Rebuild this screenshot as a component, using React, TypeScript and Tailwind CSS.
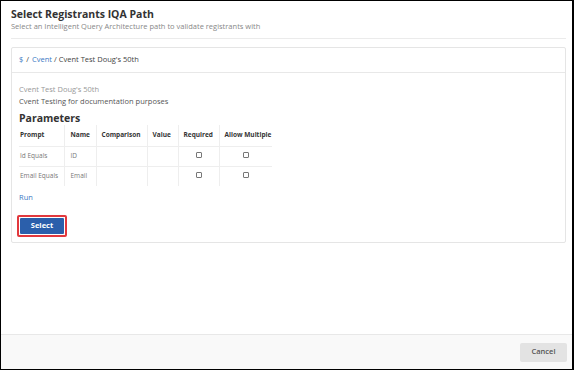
import React from "react";

const cols = [
  { label: "Prompt", w: "w-[45px]", pl: "pl-[1px]" },
  { label: "Name", w: "w-[32px]", pl: "pl-[6px]" },
  { label: "Comparison", w: "w-[51px]", pl: "pl-[5px]" },
  { label: "Value", w: "w-[31px]", pl: "pl-[5px]" },
  { label: "Required", w: "w-[41px]", pl: "pl-[5px]" },
  { label: "Allow Multiple", w: "w-[53px]", pl: "pl-[5px]" },
];

const rows = [
  ["Id Equals", "ID"],
  ["Email Equals", "Email"],
];

function Box() {
  return <span className="inline-block w-[6px] h-[6px] border border-[#777] rounded-[1px] bg-white" />;
}

export default function App() {
  return (
    <div className="w-[574px] h-[370px] border border-black border-r-2 bg-white flex flex-col font-['Open_Sans',sans-serif] text-[#333]">
      <div className="flex-1 pl-[10px] pr-[6px] pt-[7px]">
        <div className="border-b border-[#ebebeb] pb-[7px]">
          <div className="text-[10.5px] leading-[13px] font-bold text-[#333]">Select Registrants IQA Path</div>
          <div className="text-[7.5px] leading-[10px] text-[#888]">
            Select an Intelligent Query Architecture path to validate registrants with
          </div>
        </div>
        <div className="mt-[8px] border border-[#e5e5e5] rounded-[2px]">
          <div className="h-[25px] border-b border-[#e8e8e8] flex items-center px-[7px] text-[7.5px] text-[#444]">
            <span className="text-[#3b78c4]">$</span>
            <span className="mx-[3px]">/</span>
            <span className="text-[#3b78c4]">Cvent</span>
            <span className="mx-[2px]">/</span>
            <span>Cvent Test Doug's 50th</span>
          </div>
          <div className="px-[7px] pt-[10px] pb-[5px]">
            <div className="text-[7.5px] leading-[12px] text-[#999]">Cvent Test Doug's 50th</div>
            <div className="text-[7.5px] leading-[12px] text-[#555]">Cvent Testing for documentation purposes</div>
            <div className="text-[10.5px] leading-[14px] font-bold text-[#333] mt-[4px]">Parameters</div>
            <table className="border-collapse text-[6.5px] text-[#777]">
              <thead>
                <tr className="h-[21px] border-b border-[#eee]">
                  {cols.map((c, i) => (
                    <th
                      key={c.label}
                      className={`${c.w} ${c.pl} text-left font-bold text-[#333] whitespace-nowrap align-middle ${i > 0 ? "border-l border-[#eee]" : ""}`}
                    >
                      {c.label}
                    </th>
                  ))}
                </tr>
              </thead>
              <tbody>
                {rows.map((r, ri) => (
                  <tr key={ri} className={`h-[20px] ${ri === 0 ? "border-b border-[#eee]" : ""}`}>
                    <td className="pl-[1px] whitespace-nowrap">{r[0]}</td>
                    <td className="pl-[6px] border-l border-[#eee]">{r[1]}</td>
                    <td className="border-l border-[#eee]"></td>
                    <td className="border-l border-[#eee]"></td>
                    <td className="border-l border-[#eee] text-center">
                      <Box />
                    </td>
                    <td className="border-l border-[#eee] text-center">
                      <Box />
                    </td>
                  </tr>
                ))}
              </tbody>
            </table>
            <div className="mt-[5px] text-[7.5px] leading-[12px] text-[#3b78c4]">Run</div>
            <div className="mt-[12px] ml-[-2px] inline-block border-2 border-[#e2383d] rounded-[2px]">
              <div className="w-[46px] h-[18px] bg-[#2b5fab] rounded-[2px] flex items-center justify-center text-white text-[7.5px] font-bold border border-white">
                Select
              </div>
            </div>
          </div>
        </div>
      </div>
      <div className="h-[35px] border-t border-[#e8e8e8] bg-[#f9f9f9] flex items-center justify-end pr-[5px]">
        <div className="w-[47px] h-[19px] bg-[#e3e3e3] rounded-[2px] flex items-center justify-center text-[7.5px] font-semibold text-[#555]">
          Cancel
        </div>
      </div>
    </div>
  );
}
